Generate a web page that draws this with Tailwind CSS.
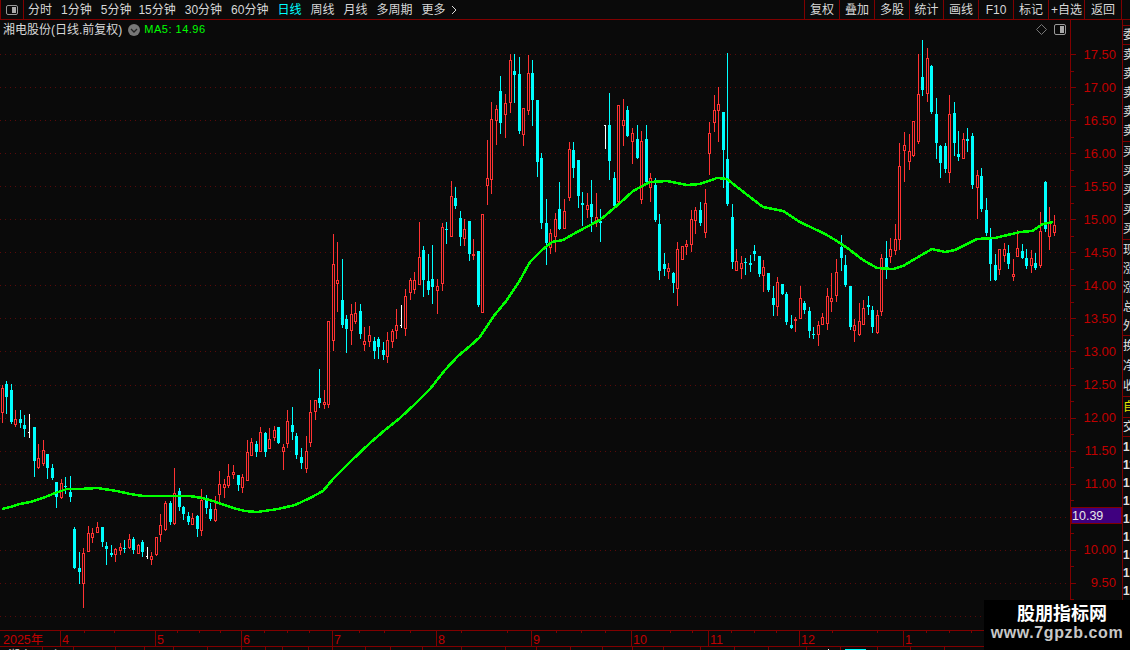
<!DOCTYPE html>
<html lang="zh-CN">
<head>
    <meta charset="UTF-8">
    <title>湘电股份 日线</title>
    <script src="https://cdn.jsdelivr.net/npm/@tailwindcss/browser@4"></script>
</head>
<body class="bg-[#0a0a0a]">
<div class="relative w-[1130px] h-[650px] overflow-hidden flex flex-col bg-[#0a0a0a] text-[12px] leading-none text-[#d8d8d8] font-['Liberation_Sans','Noto_Sans_CJK_SC',sans-serif]">

    <!-- Top toolbar -->
    <div class="flex items-center h-5 shrink-0 pr-2 border-b border-[#800000]">
        <div class="flex items-center justify-center w-6 h-full border-x border-[#800000]">
            <svg width="12" height="10" viewBox="0 0 12 10"><rect x="0.5" y="0.5" width="11" height="9" rx="1.5" fill="none" stroke="#999"/><rect x="6" y="2" width="4" height="6" fill="#aaa"/></svg>
        </div>
        <div class="flex items-center gap-[9px] ml-1">
            <span>分时</span>
            <span>1分钟</span>
            <span class="-mr-[2px]">5分钟</span>
            <span>15分钟</span>
            <span>30分钟</span>
            <span>60分钟</span>
            <span class="text-[#00ffff]">日线</span>
            <span>周线</span>
            <span>月线</span>
            <span>多周期</span>
            <span class="flex items-center gap-[5px]">更多
                <svg width="6" height="10" viewBox="0 0 6 10"><path d="M1 1l4 4-4 4" fill="none" stroke="#d8d8d8"/></svg>
            </span>
        </div>
        <div class="flex h-full ml-auto border-l border-[#800000]">
            <span class="flex items-center justify-center w-[35px] border-r border-[#800000]">复权</span>
            <span class="flex items-center justify-center w-[35px] border-r border-[#800000]">叠加</span>
            <span class="flex items-center justify-center w-[35px] border-r border-[#800000]">多股</span>
            <span class="flex items-center justify-center w-[34px] border-r border-[#800000]">统计</span>
            <span class="flex items-center justify-center w-[35px] border-r border-[#800000]">画线</span>
            <span class="flex items-center justify-center w-[35px] border-r border-[#800000]">F10</span>
            <span class="flex items-center justify-center w-[35px] border-r border-[#800000]">标记</span>
            <span class="flex items-center justify-center w-[36px] border-r border-[#800000]">+自选</span>
            <span class="flex items-center justify-center w-[37px] border-r border-[#800000]">返回</span>
        </div>
    </div>

    <div class="flex flex-1 min-h-0">
        <!-- Chart -->
        <div class="relative w-[1122px] shrink-0">
            <svg id="chart" class="absolute inset-0" width="1122" height="630" viewBox="0 20 1122 630"></svg>
            <div class="relative flex items-center w-[1070px] h-[19px] pl-[3px] pr-1">
                <span>湘电股份(日线.前复权)</span>
                <svg class="ml-[6px]" width="12" height="12" viewBox="0 0 12 12"><circle cx="6" cy="6" r="6" fill="#777"/><path d="M3 5l3 3 3-3" fill="none" stroke="#222" stroke-width="1.3"/></svg>
                <span class="ml-[4px] text-[11px] tracking-[0.5px] text-[#00ff00]">MA5: 14.96</span>
                <svg class="ml-auto" width="11" height="11" viewBox="0 0 11 11"><path d="M5.5 0.5l5 5-5 5-5-5z" fill="none" stroke="#777"/></svg>
                <svg class="ml-[7px]" width="12" height="11" viewBox="0 0 12 11"><rect x="0.5" y="0.5" width="11" height="10" rx="1.5" fill="none" stroke="#999"/><rect x="6" y="2" width="4" height="7" fill="#aaa"/></svg>
            </div>
        </div>

        <!-- Right panel, mostly cut off by the window edge -->
        <div class="flex flex-col w-2 overflow-hidden whitespace-nowrap border-l border-[#800000] text-[12px] text-[#e0e0e0]">
            <div class="h-[5px] shrink-0"></div>
            <div class="flex items-center h-5 shrink-0 border-y border-[#800000]">委比</div>
            <div class="flex flex-col justify-around h-[97px] shrink-0 border-b border-[#800000]"><span>卖五</span><span>卖四</span><span>卖三</span><span>卖二</span><span>卖一</span></div>
            <div class="flex flex-col justify-around h-[98px] shrink-0 border-b border-[#800000]"><span>买一</span><span>买二</span><span>买三</span><span>买四</span><span>买五</span></div>
            <div class="flex flex-col justify-around h-[96px] shrink-0 border-b border-[#800000]"><span>现价</span><span>涨跌</span><span>涨幅</span><span>总量</span><span>外盘</span></div>
            <div class="flex flex-col justify-around h-[61px] shrink-0 border-b border-[#800000]"><span>换手</span><span>净资</span><span>收益</span></div>
            <div class="flex items-center h-[21px] shrink-0 border-b border-[#800000] text-[#e6e600]">自选</div>
            <div class="flex items-center h-[19px] shrink-0 border-b border-[#800000]">交易</div>
            <div class="flex flex-col gap-[6px] pt-[4px] font-bold">
                <span>10</span><span>11</span><span>12</span><span>13</span><span>14</span><span>15</span><span>16</span><span>17</span><span>18</span>
            </div>
        </div>
    </div>

    <!-- Watermark -->
    <div class="absolute right-0 bottom-0 flex flex-col items-center w-[146px] h-[50px] pt-[4px] bg-black">
        <span class="ml-[10px] text-[18px] leading-[20px] font-bold text-white">股朋指标网</span>
        <span class="text-[16px] leading-[18px] font-bold tracking-[0.6px] text-[#c8c8c8]">www.7gpzb.com</span>
    </div>
</div>

<script>
    const BG = "#0a0a0a", RED = "#ff3232", CYAN = "#00ffff", AXIS = "#800000", LABEL = "#c00000";

    // candles read off the picture: type, x, high, body top, body bottom, low
    const groups = [
        { ox: 0, oy: 370, rows: `r 7 45 55 125 155|c 19 33 42 80 128|c 34 42 60 155 158|r 46 120 148 162 167|c 61 120 148 158 170|c 73 135 165 177 197|w 88 132 187 189 200|c 103 170 172 272 318|r 115 222 265 290 294|r 130 210 241 278 285|c 142 252 252 293 323|c 157 282 294 324 327|c 169 336 336 380 410|r 184 327 340 382 384|c 196 321 349 351 368|c 211 318 366 380 392|c 223 471 477 594 594|c 238 546 594 605 639|r 250 534 549 638 711|r 265 468 489 542 543|r 277 474 489 500 516|r 292 457 471 485 487|c 307 471 471 516 528|c 319 516 528 537 582|c 334 526 549 555 558|r 346 534 537 551 573|r 361 519 531 540 552|c 373 510 534 536 546|r 388 492 507 531 533|c 400 501 507 540 549|r 415 522 525 548 549|c 427 510 516 546 558|w 442 531 559 561 564|r 454 546 558 567 582|r 469 501 502 552 555|r 481 432 465 492 513|r 496 393 399 478 480|c 511 393 399 456 462|r 523 294 370 460 462|c 538 354 363 411 420|c 550 408 411 432 447|c 565 426 438 456 462|r 577 429 444 461 462|c 592 435 438 477 498|r 604 357 390 479 495|c 619 375 390 414 429|c 631 399 417 447 450|r 646 378 417 450 453|r 658 303 342 372 393|r 673 327 342 350 381|r 685 282 318 345 351|r 700 285 306 312 324|c 715 315 315 345 360|r 727 312 321 350 366|r 742 210 246 329 330|r 754 205 216 254 255|c 769 213 222 246 258|r 781 171 186 242 243|c 796 186 189 246 258|r 808 174 207 234 234|r 823 168 180 201 210|c 835 171 171 219 219` },
        { ox: 270, oy: 350, rows: `r 40 283 290 302 357|r 52 180 213 278 292|c 67 171 225 246 267|c 79 250 258 315 324|c 94 294 321 339 354|r 109 258 303 355 366|r 121 150 186 276 288|r 136 150 151 182 207|c 148 57 144 159 171|r 163 120 156 162 174|r 175 -87 -87 162 171` },
        { ox: 280, oy: 180, rows: `r 160 163 253 479 510|r 172 186 301 309 393|c 187 237 360 435 441|c 199 405 417 447 516|r 214 372 402 449 492|r 226 366 399 423 429|c 241 372 393 462 474|r 253 441 484 492 510|r 268 438 465 483 498|c 283 471 483 513 534|c 295 471 477 501 534|c 310 486 510 525 537|r 322 456 480 527 546|r 337 447 453 483 501|r 349 387 435 450 474|w 364 375 436 438 441|r 376 327 348 444 465|r 391 294 300 335 357|r 403 276 300 327 339|r 418 126 232 312 312|c 430 198 210 300 348|c 445 222 303 330 342|c 457 195 297 321 369|r 472 297 318 330 399|r 487 129 141 308 330|c 499 126 147 149 189|r 514 3 49 167 168|c 526 21 54 78 84|c 541 94 114 171 195|r 553 117 148 174 195|c 568 123 123 222 240|r 580 177 222 224 237|c 595 213 213 375 378|r 607 102 103 395 396` },
        { ox: 470, oy: 40, rows: `r 52 300 415 435 492|r 64 186 237 417 459|r 79 195 207 240 312|c 91 108 153 249 279|r 106 162 189 222 291|r 121 42 60 186 216|c 133 42 93 105 186|c 148 52 102 274 279|r 160 205 205 282 315|r 175 45 99 210 222|c 187 60 99 180 255|c 202 180 180 366 408|c 214 339 354 549 564|c 229 477 549 610 672|r 241 567 579 622 639|r 256 519 537 588 633|c 268 426 507 567 567|r 283 477 513 564 564|r 298 306 327 471 480|c 310 306 330 384 411|c 325 360 360 468 501|c 337 456 489 495 555|r 352 459 495 507 531|c 364 420 492 531 573|r 379 459 531 541 558|c 391 507 543 549 603|w 406 255 256 258 324|c 418 159 255 363 417|c 433 396 414 498 500|r 445 195 196 484 490|r 460 177 240 255 315|c 472 198 210 288 288|r 487 264 279 303 369|c 502 255 297 354 354|r 514 273 303 477 489|c 529 255 297 426 432|r 541 399 414 441 483|c 556 414 435 540 543|c 568 522 552 693 717|c 583 639 672 687 705|r 595 669 684 693 714|c 610 696 699 729 756|r 622 606 627 743 795|r 637 618 618 656 657|r 649 600 612 618 642|r 664 510 537 612 633|r 676 501 510 540 579|c 691 486 510 549 555|r 706 447 489 575 591|r 718 246 279 339 402|r 733 165 210 246 273|r 745 141 192 210 303|c 760 216 216 330 441|c 772 40 357 492 495` },
        { ox: 730, oy: 180, rows: `c 7 72 111 246 264|r 19 207 243 270 270|r 34 228 249 264 294|c 46 234 246 248 282|c 61 225 249 255 273|c 73 195 213 222 240|c 88 228 228 282 288|r 100 240 261 285 333|c 115 279 279 330 333|c 130 318 354 375 405|r 142 291 306 378 405|c 157 312 312 342 342|c 169 336 342 426 432|c 184 405 435 444 444|r 196 411 417 419 453|r 211 318 354 414 414|c 223 363 369 390 399|c 238 381 393 453 471|c 250 441 462 465 474|r 265 423 435 462 495|r 277 399 411 432 432|r 292 324 348 429 447|r 304 279 354 362 393|r 319 237 276 345 363|c 334 165 201 234 270|c 346 225 255 315 318|c 361 318 318 441 447|r 373 417 435 450 483|r 388 369 423 462 465|r 400 360 384 432 432|c 415 348 375 381 402|c 427 378 390 441 456|r 442 390 405 456 459|r 454 222 234 394 405|c 469 183 234 267 294|r 481 174 207 228 246|r 496 132 177 210 222` },
        { ox: 880, oy: 30, rows: `r 58 339 408 628 657|r 73 306 345 360 453|r 88 312 363 393 417|r 100 273 273 376 378|r 115 72 192 332 339|c 127 30 141 180 195|r 142 54 84 188 213|c 154 105 108 246 249|c 169 204 252 339 384|c 181 345 348 399 441|c 196 339 348 417 426|r 208 195 252 425 456|c 223 216 249 339 375|c 235 303 372 381 390|r 250 309 327 383 384|c 262 294 327 333 363|c 277 309 318 465 474|r 292 420 435 471 564|c 304 414 438 537 543|c 319 504 540 609 615|c 331 594 624 702 750|c 346 672 705 750 750|r 358 657 657 717 732|r 373 639 657 675 693|c 385 645 669 702 714|r 400 687 733 737 750|r 412 600 654 678 678|c 427 642 663 684 684|c 439 657 684 708 714|r 454 660 684 705 726|c 466 669 699 714 717|r 481 546 603 705 711|c 496 454 456 597 603|r 508 531 579 617 657|r 523 555 585 606 615` }
    ];

    // MA5 line
    const ma = [[2,509],[10,507],[20,504],[30,502],[43,498],[55,493],[67,489],[80,489],[97,488],[117,491],[130,494],[143,496],[165,496],[190,496],[202,498],[213,501],[233,508],[245,511],[257,512],[278,509],[295,505],[310,498],[323,491],[333,479],[350,462],[370,443],[385,430],[400,418],[415,404],[430,389],[445,370],[458,356],[470,346],[480,337],[493,317],[507,300],[520,280],[530,262],[542,250],[552,242],[563,240],[577,232],[600,220],[620,203],[633,191],[650,182],[667,181],[687,185],[700,184],[717,178],[727,179],[737,187],[750,197],[763,207],[783,211],[800,222],[825,234],[837,241],[850,250],[863,260],[877,268],[893,269],[903,266],[913,260],[925,253],[932,249],[945,252],[955,250],[965,245],[977,239],[995,238],[1020,232],[1032,231],[1043,224],[1053,222]];

    // 10.50 sits under the purple last-price box, so it has no label
    const prices = ["17.50","17.00","16.50","16.00","15.50","15.00","14.50","14.00","13.50","13.00","12.50","12.00","11.50","11.00","","10.00","9.50"];
    const months = [[3,"2025年",0],[60,"4",1],[155,"5",1],[241,"6",1],[332,"7",1],[436,"8",1],[531,"9",1],[631,"10",1],[708,"11",1],[799,"12",1],[903,"1",1]];
    const minorTicks = [84,114,177,199,220,264,287,309,359,384,410,461,507,556,581,605,670,692,731,754,776,832,877,926,949,971,1000,1025,1050];
    const bottomDividers = [42,73,115,144,173,207,241,265,282,308,332,365,390,422,461,505,536,570,602,632,663,700,734,768,806,840,877,910,944];

    let s = "";

    // grid
    for (let i = 0; i < 18; i++) {
        const y = Math.round(54 + i * 33.05) + 0.5;
        s += `<line x1="0" x2="1067" y1="${y}" y2="${y}" stroke="#5a0a0a" stroke-dasharray="1 4"/>`;
    }

    // candles
    groups.forEach(g => {
        g.rows.split("|").forEach(row => {
            const [t, z, hi, top, bot, lo] = row.split(" ");
            const x = Math.floor(g.ox + z / 3);
            const y = v => Math.round(g.oy + v / 3);
            const color = t === "r" ? RED : t === "c" ? CYAN : "#fff";
            s += `<rect x="${x}" y="${y(hi)}" width="1" height="${y(lo) - y(hi) + 1}" fill="${color}"/>`;
            if (t === "r") {
                s += `<rect x="${x - 0.5}" y="${y(top) + 0.5}" width="2" height="${Math.max(y(bot) - y(top), 1)}" fill="${BG}" stroke="${color}"/>`;
            } else if (t === "c") {
                s += `<rect x="${x - 1}" y="${y(top)}" width="3" height="${Math.max(y(bot) - y(top), 1)}" fill="${color}"/>`;
            } else {
                s += `<rect x="${x - 1}" y="${y(top)}" width="2" height="1" fill="${color}"/>`;
            }
        });
    });

    s += `<polyline points="${ma.join(" ")}" fill="none" stroke="#00ff00" stroke-width="2.5" shape-rendering="crispEdges"/>`;

    // price axis
    s += `<line x1="1070.5" x2="1070.5" y1="20" y2="630" stroke="${AXIS}"/>`;
    for (let i = 0; i < 36; i++) {
        const y = Math.round(54 + i * 16.525) + 0.5;
        s += `<line x1="1071" x2="${i % 2 ? 1074 : 1076}" y1="${y}" y2="${y}" stroke="${AXIS}"/>`;
    }
    prices.forEach((p, i) => {
        if (p) s += `<text x="1116" y="${54 + i * 33.05 + 4.5}" text-anchor="end" font-size="13" fill="${LABEL}">${p}</text>`;
    });
    s += `<rect x="1071.5" y="507.5" width="50" height="16" fill="#3f007f" stroke="${AXIS}"/>`;
    s += `<text x="1072" y="520" font-size="12.5" fill="#e8e8e8">10.39</text>`;

    // date axis
    s += `<line x1="0" x2="1122" y1="630.5" y2="630.5" stroke="${AXIS}"/>`;
    s += `<line x1="0" x2="1122" y1="646.5" y2="646.5" stroke="${AXIS}"/>`;
    minorTicks.forEach(x => { s += `<line x1="${x + 0.5}" x2="${x + 0.5}" y1="631" y2="633" stroke="${AXIS}"/>`; });
    months.forEach(([x, label, line]) => {
        if (line) s += `<line x1="${x + 0.5}" x2="${x + 0.5}" y1="631" y2="646" stroke="${AXIS}"/>`;
        s += `<text x="${x + (line ? 2 : 0)}" y="644" font-size="12.5" fill="${LABEL}">${label}</text>`;
    });

    // row under the date axis, only its top pixels are in the window
    bottomDividers.forEach(x => { s += `<line x1="${x + 0.5}" x2="${x + 0.5}" y1="647" y2="650" stroke="${AXIS}"/>`; });
    s += `<text x="8" y="660" font-size="12" fill="#e0e0e0">湘电</text>`;
    s += `<text x="50" y="660" font-size="12" fill="#e0e0e0">上</text>`;
    s += `<rect x="828" y="649" width="1" height="1" fill="#fff"/>`;
    s += `<rect x="845" y="649" width="21" height="1" fill="${CYAN}"/>`;

    document.getElementById("chart").innerHTML = s;
</script>
</body>
</html>
